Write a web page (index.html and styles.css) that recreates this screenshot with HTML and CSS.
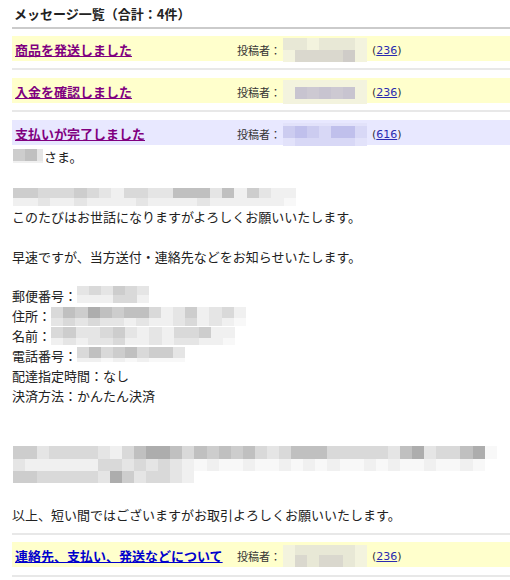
FILE: index.html
```html
<!DOCTYPE html>
<html lang="ja">
<head>
<meta charset="utf-8">
<title>メッセージ一覧</title>
<link rel="stylesheet" href="styles.css">
</head>
<body>
<div class="page">
  <h2 class="title">メッセージ一覧（合計：4件）</h2>

  <div class="item">
    <div class="row yellow">
      <div class="subj-cell"><a class="subj visited" href="#">商品を発送しました</a></div>
      <div class="poster">
        <span class="plabel">投稿者：</span>
        <span class="mos pmos">
          <span class="mr h12"><i class="yb"></i><i class="yb"></i><i class="ya"></i><i class="yb"></i><i class="yb"></i><i class="yb"></i><i class="ya"></i></span>
          <span class="mr h12"><i class="ya"></i><i class="yc"></i><i class="yc"></i><i class="yc"></i><i class="yc"></i><i class="yd"></i><i class="ya"></i></span>
        </span>
        <span class="cnt">(<a href="#">236</a>)</span>
      </div>
    </div>
  </div>

  <div class="item">
    <div class="row yellow">
      <div class="subj-cell"><a class="subj visited" href="#">入金を確認しました</a></div>
      <div class="poster">
        <span class="plabel">投稿者：</span>
        <span class="mos pmos">
          <span class="mr h7"><i class="ya"></i><i class="ya"></i><i class="ya"></i><i class="ya"></i><i class="ya"></i><i class="ya"></i><i class="ya"></i></span>
          <span class="mr h12"><i class="ya"></i><i class="gl"></i><i class="gl2"></i><i class="gl"></i><i class="gl2"></i><i class="gl"></i><i class="ya"></i></span>
          <span class="mr h5"><i class="ya"></i><i class="ya"></i><i class="ya"></i><i class="ya"></i><i class="ya"></i><i class="ya"></i><i class="ya"></i></span>
        </span>
        <span class="cnt">(<a href="#">236</a>)</span>
      </div>
    </div>
  </div>

  <div class="item body-item">
    <div class="row lavender">
      <div class="subj-cell"><a class="subj visited" href="#">支払いが完了しました</a></div>
      <div class="poster">
        <span class="plabel">投稿者：</span>
        <span class="mos pmos">
          <span class="mr h3"><i class="lx"></i><i class="lx"></i><i class="lx"></i><i class="lx"></i><i class="lx"></i><i class="lx"></i><i class="lx"></i></span>
          <span class="mr h12"><i class="lb"></i><i class="lc"></i><i class="lb"></i><i class="la"></i><i class="lc"></i><i class="lc"></i><i class="la"></i></span>
          <span class="mr h8"><i class="lx"></i><i class="la"></i><i class="la"></i><i class="la"></i><i class="la"></i><i class="la"></i><i class="lx"></i></span>
        </span>
        <span class="cnt">(<a href="#">616</a>)</span>
      </div>
    </div>

    <div class="msg">
      <span class="mos nm"><span class="mr h12"><i class="d"></i><i class="e"></i><i class="b w6"></i></span><span class="mr h2"><i class="a"></i><i class="a"></i><i class="a w6"></i></span></span>さま。<br>
      <br>
      <span class="mos bl"><span class="mr h10"><i class="d"></i><i class="d"></i><i class="c"></i><i class="c"></i><i class="c"></i><i class="d"></i><i class="c"></i><i class="b"></i><i class="a"></i><i class="c"></i><i class="c"></i><i class="b"></i><i class="b"></i><i class="e"></i><i class="e"></i><i class="e"></i><i class="b"></i><i class="e"></i><i class="a"></i><i class="d"></i><i class="b"></i><i class="a"></i><i class="a"></i></span><span class="mr h8"><i class="a"></i><i class="a"></i><i class="b"></i><i class="a"></i><i class="a"></i><i class="b"></i><i class="a"></i><i class="a"></i><i class="a"></i><i class="a"></i><i class="b"></i><i class="a"></i><i class="a"></i><i class="a"></i><i class="a"></i><i class="b"></i><i class="a"></i><i class="a"></i><i class="a"></i><i class="a"></i><i class="a"></i><i class="a"></i><i class="w"></i></span></span><br>
      このたびはお世話になりますがよろしくお願いいたします。<br>
      <br>
      早速ですが、当方送付・連絡先などをお知らせいたします。<br>
      <br>
      郵便番号：<span class="mos zp"><span class="mr h9"><i class="b"></i><i class="c"></i><i class="b"></i><i class="d"></i><i class="c"></i><i class="b"></i></span><span class="mr h8"><i class="a"></i><i class="a"></i><i class="a"></i><i class="c"></i><i class="c"></i><i class="a"></i></span></span><br>
      住所：<span class="mos ad"><span class="mr h11"><i class="c"></i><i class="e"></i><i class="d"></i><i class="f"></i><i class="e"></i><i class="d"></i><i class="e"></i><i class="e"></i><i class="c"></i><i class="a"></i><i class="b"></i><i class="d"></i><i class="a"></i><i class="b"></i><i class="c"></i><i class="a"></i></span><span class="mr h8"><i class="b"></i><i class="c"></i><i class="b"></i><i class="c"></i><i class="b"></i><i class="b"></i><i class="a"></i><i class="b"></i><i class="a"></i><i class="a"></i><i class="b"></i><i class="c"></i><i class="a"></i><i class="b"></i><i class="a"></i><i class="w"></i></span></span><br>
      名前：<span class="mos nmz"><span class="mr h11"><i class="c"></i><i class="d"></i><i class="b"></i><i class="b"></i><i class="c"></i><i class="d"></i><i class="b"></i><i class="a"></i><i class="b"></i><i class="a"></i><i class="c"></i><i class="c"></i><i class="d"></i><i class="a"></i><i class="a"></i></span><span class="mr h7"><i class="a"></i><i class="b"></i><i class="a"></i><i class="b"></i><i class="b"></i><i class="c"></i><i class="a"></i><i class="a"></i><i class="b"></i><i class="a"></i><i class="b"></i><i class="b"></i><i class="a"></i><i class="a"></i><i class="w"></i></span></span><br>
      電話番号：<span class="mos tel"><span class="mr h11"><i class="c"></i><i class="e"></i><i class="c"></i><i class="d"></i><i class="e"></i><i class="c"></i><i class="d"></i><i class="d"></i><i class="b"></i></span><span class="mr h4"><i class="a"></i><i class="a"></i><i class="w"></i><i class="a"></i><i class="w"></i><i class="a"></i><i class="w"></i><i class="w"></i><i class="w"></i></span></span><br>
      配達指定時間：なし<br>
      決済方法：かんたん決済<br>
      <br>
      <br>
    </div>

    <div class="bigmos">
      <span class="mos big">
        <span class="mr"><i class="d"></i><i class="d"></i><i class="b"></i><i class="c"></i><i class="c"></i><i class="c"></i><i class="c"></i><i class="b"></i><i class="a"></i><i class="c"></i><i class="e"></i><i class="f"></i><i class="f"></i><i class="e"></i><i class="c"></i><i class="e"></i><i class="d"></i><i class="e"></i><i class="d"></i><i class="e"></i><i class="c"></i><i class="b"></i><i class="c"></i><i class="e"></i><i class="e"></i><i class="e"></i><i class="c"></i><i class="c"></i><i class="c"></i><i class="c"></i><i class="c"></i><i class="b"></i><i class="e"></i><i class="f"></i><i class="b"></i><i class="c"></i><i class="c"></i><i class="e"></i><i class="f"></i><i class="w"></i></span>
        <span class="mr"><i class="b"></i><i class="a"></i><i class="a"></i><i class="a"></i><i class="a"></i><i class="a"></i><i class="a"></i><i class="c"></i><i class="c"></i><i class="b"></i><i class="c"></i><i class="b"></i><i class="c"></i><i class="b"></i><i class="a"></i><i class="w"></i><i class="a"></i><i class="w"></i><i class="w"></i><i class="a"></i><i class="w"></i><i class="w"></i><i class="a"></i><i class="w"></i><i class="a"></i><i class="w"></i><i class="a"></i><i class="w"></i><i class="w"></i><i class="a"></i><i class="w"></i><i class="a"></i><i class="w"></i><i class="w"></i><i class="a"></i><i class="w"></i><i class="w"></i><i class="a"></i><i class="w"></i></span>
        <span class="mr"><i class="d"></i><i class="d"></i><i class="c"></i><i class="c"></i><i class="c"></i><i class="c"></i><i class="c"></i><i class="b"></i><i class="f"></i><i class="d"></i><i class="b"></i><i class="c"></i><i class="c"></i><i class="b"></i><i class="a"></i></span>
      </span>
    </div>

    <div class="msg">
      <br>
      以上、短い間ではございますがお取引よろしくお願いいたします。
    </div>
  </div>

  <div class="item last">
    <div class="row yellow">
      <div class="subj-cell"><a class="subj" href="#">連絡先、支払い、発送などについて</a></div>
      <div class="poster">
        <span class="plabel">投稿者：</span>
        <span class="mos pmos">
          <span class="mr h10"><i class="ya"></i><i class="yb"></i><i class="yb"></i><i class="yb"></i><i class="yb"></i><i class="yb"></i><i class="ya"></i></span>
          <span class="mr h12"><i class="ya"></i><i class="yc"></i><i class="yb"></i><i class="yc"></i><i class="yc"></i><i class="yb"></i><i class="ya"></i></span>
        </span>
        <span class="cnt">(<a href="#">236</a>)</span>
      </div>
    </div>
  </div>
</div>
</body>
</html>
```

FILE: styles.css
```css
* { box-sizing: border-box; }

body {
  margin: 0;
  background: #fff;
  color: #222;
  font-family: "Noto Sans CJK JP", "Noto Sans", sans-serif;
}

.page {
  margin-left: 12px;
  width: 498px;
}

.title {
  margin: 0;
  height: 29px;
  padding-left: 2px;
  line-height: 27px;
  font-size: 13px;
  font-weight: bold;
  color: #222;
  border-bottom: 2px solid #cbcbcb;
}

.item {
  padding-top: 7px;
}

.item + .item {
  border-top: 2px solid #e8e8e8;
  padding-top: 8px;
}

.item.last {
  padding-top: 7px;
  border-bottom: 2px solid #e8e8e8;
}

.row {
  display: grid;
  grid-template-columns: 225px 1fr;
  align-items: center;
  height: 25px;
  margin-bottom: 7px;
}

.item.last .row { margin-bottom: 8px; }
.body-item .row { margin-bottom: 2px; }
.body-item { padding-bottom: 8px; }

.yellow { background: #ffffcc; }
.lavender { background: #e8e8ff; }

.subj-cell {
  padding-left: 3px;
  padding-bottom: 4px;
  white-space: nowrap;
}

.subj {
  font-size: 13px;
  font-weight: bold;
  color: #0000cc;
  text-decoration: underline;
  text-underline-offset: 1px;
}

.subj.visited { color: #800080; }

.poster {
  display: flex;
  align-items: center;
  height: 25px;
  white-space: nowrap;
}

.plabel {
  font-size: 11px;
  color: #333;
  width: 44px;
}

.cnt {
  margin-left: 5px;
  font-family: "DejaVu Sans", sans-serif;
  font-size: 11px;
  color: #333;
}

.cnt a {
  color: #2b2bb0;
  text-decoration: underline;
}

/* mosaic (blurred personal data) */
.mos {
  display: inline-flex;
  flex-direction: column;
  vertical-align: top;
}

.mr { display: flex; }

.mos i {
  display: block;
  width: 12px;
  height: 12px;
}

.mos i.w6 { width: 6px; }

.h2 i { height: 2px; }
.h3 i { height: 3px; }
.h4 i { height: 4px; }
.h5 i { height: 5px; }
.h7 i { height: 7px; }
.h8 i { height: 8px; }
.h9 i { height: 9px; }
.h10 i { height: 10px; }
.h11 i { height: 11px; }
.h12 i { height: 12px; }

.pmos { margin-left: 2px; }

.nm { margin: 2px 1px 0 1px; }
.bl { margin: 1px 0 0 1px; }
.bl i { width: 12.3px; }
.zp { margin-top: 0; }
.ad { margin-top: 1px; }
.ad i { width: 12.2px; }
.nmz { margin-top: 1px; }
.nmz i { width: 12.3px; }
.tel { margin-top: 1px; }

.bigmos {
  height: 39.8px;
  padding-top: 0.5px;
}

.big { margin-left: 1px; }
.big i { width: 12.1px; height: 12.4px; }

.a { background: #f0f0f0; }
.b { background: #e5e5e5; }
.c { background: #d9d9d9; }
.d { background: #cdcdcd; }
.e { background: #c0c0c0; }
.f { background: #adadad; }
.w { background: #f8f8f8; }

.ya { background: #f3f3de; }
.yb { background: #e8e8d6; }
.yc { background: #dad8ce; }
.yd { background: #cfccc8; }
.gl { background: #c8c4d0; }
.gl2 { background: #cdc9d2; }
.lx { background: #e2e2fa; }
.la { background: #d8d8f6; }
.lb { background: #ccccf0; }
.lc { background: #c0c0ec; }

.msg {
  font-size: 13px;
  line-height: 19.9px;
  color: #222;
  white-space: nowrap;
}
```
